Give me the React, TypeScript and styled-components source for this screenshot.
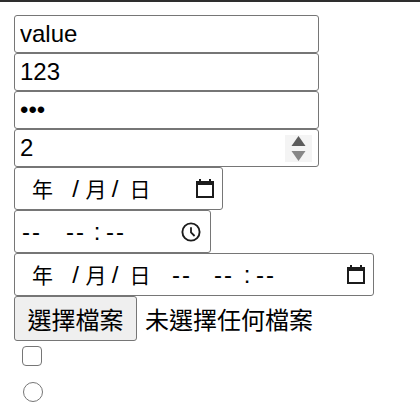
import React from 'react';
import styled, { createGlobalStyle } from 'styled-components';

const GlobalStyle = createGlobalStyle`
  html, body { margin: 0; padding: 0; background: #fff; }
  body { font-family: "Liberation Sans", Arial, "Noto Sans CJK TC", sans-serif; color: #000; }
`;

const Frame = styled.div`
  border-top: 2px solid #2e2e2e;
  padding: 13px 14px;
  display: flex;
  flex-direction: column;
  align-items: flex-start;
`;

const TextField = styled.input`
  box-sizing: border-box;
  width: 305px;
  height: 38px;
  margin: 0;
  padding: 0 5px;
  font: 24px "Liberation Sans", Arial, sans-serif;
  color: #000;
  border: 1px solid #767676;
  border-radius: 3px;
  background: #fff;
  outline: none;
`;

const Box = styled.div<{ $w: number; $h: number; $pr?: number }>`
  box-sizing: border-box;
  width: ${(p) => p.$w}px;
  height: ${(p) => p.$h}px;
  display: flex;
  align-items: center;
  border: 1px solid #767676;
  border-radius: 3px;
  background: #fff;
  font: 24px "Liberation Sans", Arial, "Noto Sans CJK TC", sans-serif;
  padding-right: ${(p) => p.$pr ?? 8}px;
`;

const BareInput = styled.input`
  flex: 1;
  min-width: 0;
  border: none;
  outline: none;
  background: transparent;
  padding: 0 0 0 5px;
  font: inherit;
  color: #000;
`;

const Spinner = styled.svg`
  flex: none;
`;

const Seg = styled.span<{ $w: number; $ml?: number; $cjk?: boolean }>`
  display: inline-block;
  flex: none;
  width: ${(p) => p.$w}px;
  margin-left: ${(p) => p.$ml ?? 0}px;
  text-align: center;
  white-space: nowrap;
  font-family: ${(p) => (p.$cjk ? '"Noto Sans CJK TC", sans-serif' : '"Liberation Sans", Arial, sans-serif')};
  font-size: ${(p) => (p.$cjk ? 21 : 24)}px;
  line-height: 1;
  color: #000;
`;

const Dashes = styled(Seg)`
  letter-spacing: 2px;
  padding-left: 2px;
  box-sizing: border-box;
`;

const Icon = styled.svg`
  flex: none;
  margin-left: auto;
`;

const FileRow = styled.div`
  display: flex;
  align-items: center;
  font: 24px "Noto Sans CJK TC", sans-serif;
`;

const FileButton = styled.button`
  box-sizing: border-box;
  width: 123px;
  height: 45px;
  padding: 0;
  margin: 0;
  font: inherit;
  line-height: 1;
  color: #000;
  background: #efefef;
  border: 1px solid #767676;
  border-radius: 3px;
`;

const FileName = styled.span`
  margin-left: 8px;
  line-height: 1;
`;

const Tick = styled.input<{ $round?: boolean }>`
  appearance: none;
  box-sizing: border-box;
  width: 20px;
  height: 20px;
  margin: ${(p) => (p.$round ? '16px 0 0 9px' : '5px 0 0 8px')};
  border: 1.5px solid #767676;
  border-radius: ${(p) => (p.$round ? '50%' : '4px')};
  background: #fff;
`;

const Calendar = () => (
  <Icon width="18" height="19" viewBox="0 0 18 19">
    <rect x="3" y="0" width="2" height="3" fill="#1b1b1b" />
    <rect x="13" y="0" width="2" height="3" fill="#1b1b1b" />
    <rect x="0" y="2" width="18" height="4" fill="#1b1b1b" />
    <rect x="1" y="3" width="16" height="15" fill="none" stroke="#1b1b1b" strokeWidth="2" />
  </Icon>
);

const Clock = () => (
  <Icon width="20" height="20" viewBox="0 0 20 20">
    <circle cx="10" cy="10" r="8.6" fill="none" stroke="#1b1b1b" strokeWidth="1.9" />
    <path d="M10 5.2V10.4L13.6 14" fill="none" stroke="#1b1b1b" strokeWidth="1.8" />
  </Icon>
);

const DateSegs = () => (
  <>
    <Seg $cjk $w={25} $ml={15}>年</Seg>
    <Seg $w={17} $ml={12}>/</Seg>
    <Seg $cjk $w={24}>月</Seg>
    <Seg $w={14}>/</Seg>
    <Seg $cjk $w={24} $ml={6}>日</Seg>
  </>
);

const TimeSegs = ({ lead, gap, colon }: { lead: number; gap: number; colon: number }) => (
  <>
    <Dashes $w={22} $ml={lead}>--</Dashes>
    <Dashes $w={22} $ml={gap}>--</Dashes>
    <Seg $w={8} $ml={colon}>:</Seg>
    <Dashes $w={22} $ml={3}>--</Dashes>
  </>
);

export default function App() {
  return (
    <>
      <GlobalStyle />
      <Frame>
        <TextField type="text" defaultValue="value" />
        <TextField type="text" defaultValue="123" />
        <TextField type="password" defaultValue="abc" />
        <Box $w={305} $h={38} $pr={6}>
          <BareInput type="text" inputMode="numeric" defaultValue="2" />
          <Spinner width="27" height="27" viewBox="0 0 27 27">
            <rect width="27" height="27" fill="#f4f4f4" />
            <path d="M6.5 11 13.5 1 20.5 11Z" fill="#5c5c5c" />
            <path d="M6.5 16 13.5 26 20.5 16Z" fill="#878787" />
          </Spinner>
        </Box>
        <Box $w={209} $h={43}>
          <DateSegs />
          <Calendar />
        </Box>
        <Box $w={197} $h={43} $pr={9}>
          <TimeSegs lead={5} gap={22} colon={7} />
          <Clock />
        </Box>
        <Box $w={360} $h={43}>
          <DateSegs />
          <TimeSegs lead={18} gap={20} colon={9} />
          <Calendar />
        </Box>
        <FileRow>
          <FileButton type="button">選擇檔案</FileButton>
          <FileName>未選擇任何檔案</FileName>
        </FileRow>
        <Tick type="checkbox" />
        <Tick type="radio" $round />
      </Frame>
    </>
  );
}
